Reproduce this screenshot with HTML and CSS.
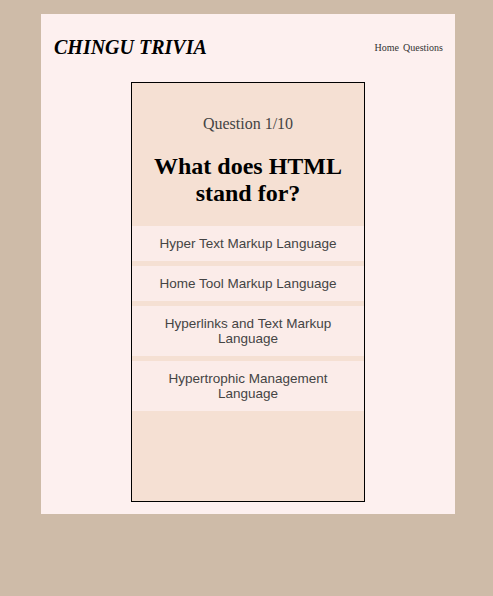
FILE: index.html
```html
<!DOCTYPE html>
<html>
<head>
<meta charset="utf-8">
<link rel="stylesheet" href="styles.css">
</head>
<body>
<div class="page">
  <header class="header">
    <h1 class="logo">CHINGU TRIVIA</h1>
    <nav class="nav"><a class="nav-link">Home</a><a class="nav-link">Questions</a></nav>
  </header>
  <main class="card">
    <div class="card-top">
      <p class="count">Question 1/10</p>
      <h2 class="question">What does HTML stand for?</h2>
    </div>
    <ul class="answers">
      <li class="answer">Hyper Text Markup Language</li>
      <li class="answer">Home Tool Markup Language</li>
      <li class="answer">Hyperlinks and Text Markup Language</li>
      <li class="answer">Hypertrophic Management Language</li>
    </ul>
  </main>
</div>
</body>
</html>
```
FILE: styles.css
```css
html, body { margin: 0; padding: 0; }
body {
  background: #cebba8;
  font-family: "Liberation Serif", serif;
  min-height: 596px;
  padding-top: 14px;
  box-sizing: border-box;
}
.page {
  width: 414px;
  height: 500px;
  margin-left: 41px;
  background: #fdf0ef;
  box-sizing: border-box;
  padding-top: 23px;
}
.header {
  display: flex;
  justify-content: space-between;
  align-items: center;
  padding: 0 12px 0 13px;
  height: 20px;
}
.logo {
  margin: 0;
  font-size: 20px;
  font-style: italic;
  font-weight: bold;
  color: #000;
}
.nav {
  display: flex;
  gap: 4px;
  font-size: 10px;
  color: #333;
}
.card {
  width: 234px;
  height: 420px;
  box-sizing: border-box;
  margin: 25px auto 0;
  border: 1px solid #000;
  background: #f5e0d3;
}
.card-top {
  text-align: center;
  padding: 32px 10px 19px;
}
.count {
  margin: 0;
  font-size: 16px;
  color: #444;
}
.question {
  margin: 20px 0 0;
  font-size: 24px;
  font-weight: bold;
  line-height: 27px;
  color: #000;
}
.answers {
  list-style: none;
  margin: 0;
  padding: 0;
  display: flex;
  flex-direction: column;
  gap: 5px;
}
.answer {
  background: #fbece9;
  font-family: "Liberation Sans", Arial, sans-serif;
  font-size: 13.5px;
  line-height: 15px;
  color: #444;
  text-align: center;
  padding: 10px 20px;
}
```
